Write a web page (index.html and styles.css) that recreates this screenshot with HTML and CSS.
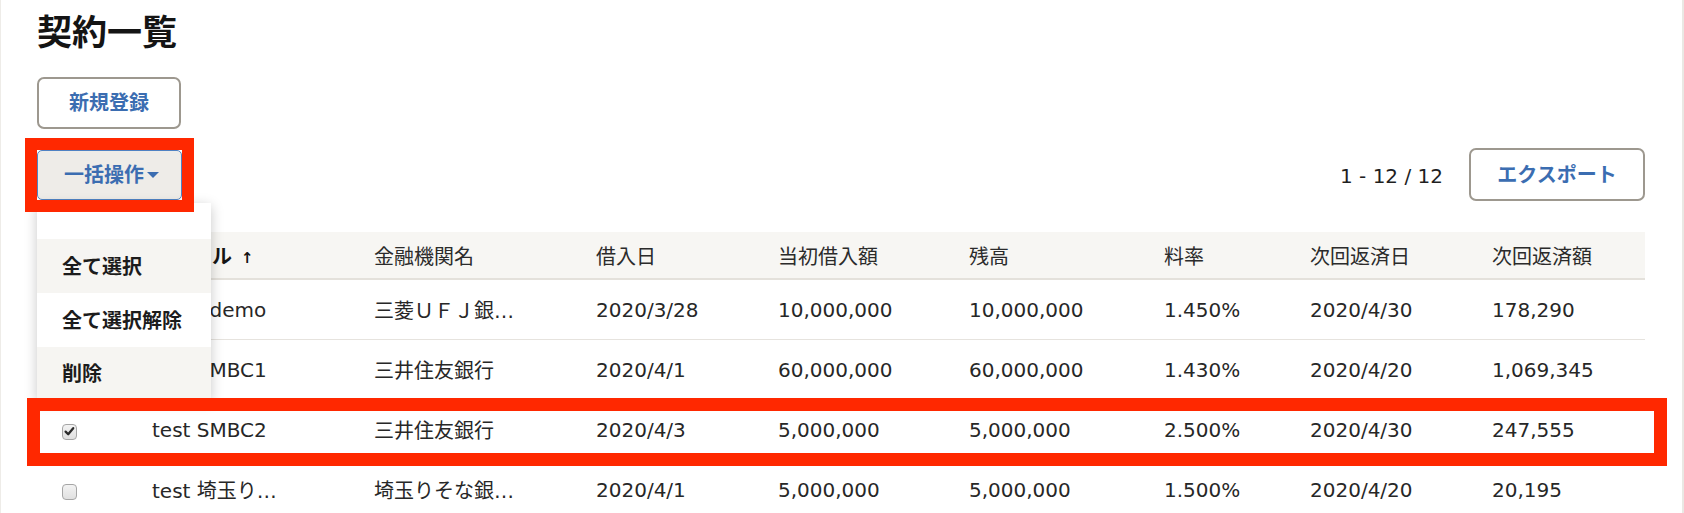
FILE: index.html
```html
<!DOCTYPE html>
<html lang="ja">
<head>
<meta charset="utf-8">
<title>契約一覧</title>
<link rel="stylesheet" href="styles.css">
</head>
<body>
<div class="page">
  <h1 class="title">契約一覧</h1>
  <div class="actions">
    <button class="btn">新規登録</button>
  </div>
  <div class="toolbar">
    <div class="bulk">
      <button class="btn btn-bulk">一括操作<span class="caret"></span></button>
      <div class="annot annot-bulk"></div>
      <div class="menu">
        <div class="menu-spacer"></div>
        <div class="menu-item menu-item-hover">全て選択</div>
        <div class="menu-item">全て選択解除</div>
        <div class="menu-item menu-item-hover menu-item-last">削除</div>
      </div>
    </div>
    <div class="toolbar-right">
      <span class="pager">1 - 12 / 12</span>
      <button class="btn btn-export">エクスポート</button>
    </div>
  </div>
  <div class="table-wrap">
    <table class="grid">
      <thead>
        <tr>
          <th class="col-check"></th>
          <th class="col-title sorted">タイトル<span class="sort">↑</span></th>
          <th class="col-bank">金融機関名</th>
          <th class="col-date">借入日</th>
          <th class="col-init">当初借入額</th>
          <th class="col-bal">残高</th>
          <th class="col-rate">料率</th>
          <th class="col-next">次回返済日</th>
          <th class="col-amt">次回返済額</th>
        </tr>
      </thead>
      <tbody>
        <tr>
          <td><span class="cb"></span></td>
          <td>test1 demo</td>
          <td>三菱ＵＦＪ銀…</td>
          <td>2020/3/28</td>
          <td>10,000,000</td>
          <td>10,000,000</td>
          <td>1.450%</td>
          <td>2020/4/30</td>
          <td>178,290</td>
        </tr>
        <tr>
          <td><span class="cb"></span></td>
          <td>test SMBC1</td>
          <td>三井住友銀行</td>
          <td>2020/4/1</td>
          <td>60,000,000</td>
          <td>60,000,000</td>
          <td>1.430%</td>
          <td>2020/4/20</td>
          <td>1,069,345</td>
        </tr>
        <tr>
          <td><span class="cb cb-checked"><svg viewBox="0 0 15 15" width="15" height="15"><path d="M3.6 7.6 L6.2 10.2 L11.2 4.2" fill="none" stroke="#2b2b2b" stroke-width="2.3" stroke-linecap="round" stroke-linejoin="round"/></svg></span></td>
          <td>test SMBC2</td>
          <td>三井住友銀行</td>
          <td>2020/4/3</td>
          <td>5,000,000</td>
          <td>5,000,000</td>
          <td>2.500%</td>
          <td>2020/4/30</td>
          <td>247,555</td>
        </tr>
        <tr>
          <td><span class="cb"></span></td>
          <td>test 埼玉り…</td>
          <td>埼玉りそな銀…</td>
          <td>2020/4/1</td>
          <td>5,000,000</td>
          <td>5,000,000</td>
          <td>1.500%</td>
          <td>2020/4/20</td>
          <td>20,195</td>
        </tr>
      </tbody>
    </table>
    <div class="annot annot-row"></div>
  </div>
</div>
</body>
</html>
```
FILE: styles.css
```css
html, body {
  margin: 0;
  padding: 0;
  background: #ffffff;
}

body {
  font-family: "DejaVu Sans", "Noto Sans CJK JP", sans-serif;
  font-size: 20px;
  color: #262626;
}

.page {
  box-sizing: border-box;
  width: 1684px;
  height: 513px;
  overflow: hidden;
  border-left: 1px solid #eeece8;
  border-right: 2px solid #eae8e4;
  padding: 16px 37px 0 36px;
}

.title {
  margin: 0;
  font-size: 35px;
  line-height: 35px;
  font-weight: bold;
  color: #141414;
}

.actions {
  margin-top: 26px;
  display: flex;
}

.btn {
  box-sizing: border-box;
  display: flex;
  align-items: center;
  justify-content: center;
  padding: 0;
  margin: 0;
  width: 144px;
  height: 52px;
  background: #ffffff;
  border: 2px solid #9d988f;
  border-radius: 7px;
  font-family: "DejaVu Sans", "Noto Sans CJK JP", sans-serif;
  font-size: 20px;
  font-weight: bold;
  color: #3b6db1;
  line-height: 1;
}

.toolbar {
  margin-top: 19px;
  height: 53px;
  display: flex;
  align-items: center;
  justify-content: space-between;
}

.bulk {
  position: relative;
  width: 145px;
  height: 50px;
}

.btn-bulk {
  width: 145px;
  height: 50px;
  background: #eeece8;
  border: 1.5px solid #4f82c3;
  border-radius: 5px;
  padding-left: 4px;
}

.caret {
  display: inline-block;
  width: 0;
  height: 0;
  margin-left: 3px;
  border-left: 6px solid transparent;
  border-right: 6px solid transparent;
  border-top: 6px solid #3b6db1;
}

.annot {
  position: absolute;
  box-sizing: border-box;
  border-style: solid;
  border-color: #ff2800;
  z-index: 10;
  pointer-events: none;
}

.annot-bulk {
  left: -12px;
  top: -12px;
  width: 169px;
  height: 74px;
  border-width: 12px;
}

.menu {
  position: absolute;
  left: 0;
  top: 53px;
  width: 174px;
  background: #ffffff;
  box-shadow: 0 3px 12px rgba(0, 0, 0, 0.22);
  z-index: 5;
}

.menu-spacer {
  height: 36px;
}

.menu-item {
  box-sizing: border-box;
  height: 54px;
  display: flex;
  align-items: center;
  padding-left: 25px;
  font-weight: bold;
  color: #1c1c1c;
  white-space: nowrap;
}

.menu-item-hover {
  background: #f6f5f2;
}

.menu-item-last {
  height: 52px;
}

.toolbar-right {
  display: flex;
  align-items: center;
}

.pager {
  color: #1f1f1f;
  margin-right: 26px;
  margin-top: 3px;
}

.btn-export {
  width: 176px;
  height: 53px;
}

.table-wrap {
  position: relative;
  margin-top: 31px;
}

.grid {
  width: 1608px;
  table-layout: fixed;
  border-collapse: separate;
  border-spacing: 0;
}

.grid th {
  box-sizing: border-box;
  height: 48px;
  padding: 0 0 0 25px;
  text-align: left;
  font-weight: normal;
  color: #2b2b2b;
  background: #f7f6f3;
  border-bottom: 2px solid #e4e1db;
  white-space: nowrap;
}

.grid th.sorted {
  font-weight: bold;
  color: #151515;
}

.sort {
  font-size: 15px;
  margin-left: 9px;
  font-weight: bold;
  position: relative;
  top: -1px;
}

.grid td {
  box-sizing: border-box;
  height: 60px;
  padding: 0 0 0 25px;
  border-bottom: 1px solid #e6e3de;
  white-space: nowrap;
  overflow: hidden;
  color: #272727;
}

.col-check { width: 90px; }
.col-title { width: 222px; }
.col-bank { width: 222px; }
.col-date { width: 182px; }
.col-init { width: 191px; }
.col-bal { width: 195px; }
.col-rate { width: 146px; }
.col-next { width: 182px; }
.col-amt { width: 178px; }

.cb {
  box-sizing: border-box;
  display: inline-block;
  vertical-align: middle;
  width: 15px;
  height: 16px;
  border: 1px solid #a6a6a6;
  border-radius: 4px;
  background: linear-gradient(#f3f3f3, #e0e0e0);
  position: relative;
  top: 1px;
}

.cb svg {
  position: absolute;
  left: -1px;
  top: -1px;
}

.annot-row {
  left: -10px;
  top: 166px;
  width: 1640px;
  height: 68px;
  border-width: 13px;
}
```
